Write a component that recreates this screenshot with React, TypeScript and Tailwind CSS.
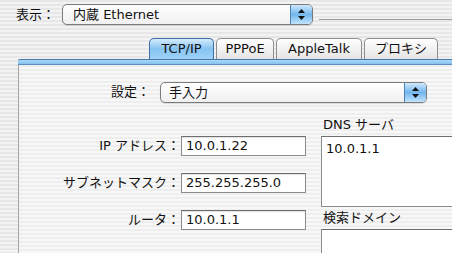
import type { ReactNode } from "react";

const TABS = [
  { label: "TCP/IP", w: "w-[65px]", active: true },
  { label: "PPPoE", w: "w-[58px]", active: false },
  { label: "AppleTalk", w: "w-[86px]", active: false },
  { label: "プロキシ", w: "w-[74px]", active: false },
];

function Arrows() {
  return (
    <div className="w-[22px] flex flex-col items-center justify-center gap-[3px] border-l border-[#4d82bb] bg-gradient-to-b from-[#cfe8fb] via-[#72b6ee] to-[#c2e4fc]">
      <svg width="7" height="4" viewBox="0 0 7 4">
        <path d="M3.5 0L7 4H0Z" fill="#111" />
      </svg>
      <svg width="7" height="4" viewBox="0 0 7 4">
        <path d="M0 0H7L3.5 4Z" fill="#111" />
      </svg>
    </div>
  );
}

function Popup({ children, className }: { children: ReactNode; className: string }) {
  return (
    <div
      className={`flex h-[21px] rounded-[5px] border border-[#7a7a7a] overflow-hidden bg-gradient-to-b from-white to-[#f0f0f0] shadow-[0_1px_1px_rgba(0,0,0,0.12)] ${className}`}
    >
      <div className="flex-1 flex items-center leading-none">{children}</div>
      <Arrows />
    </div>
  );
}

function Field({ value }: { value: string }) {
  return (
    <div className="w-[125px] h-[20px] flex items-center pl-[4px] bg-white border border-[#8c8c8c] border-t-[#6e6e6e] shadow-[inset_0_1px_1px_rgba(0,0,0,0.12)] leading-none">
      {value}
    </div>
  );
}

function Row({ label, value }: { label: string; value: string }) {
  return (
    <div className="flex items-center h-[20px]">
      <div className="w-[162px] text-right pr-[1px]">{label}</div>
      <Field value={value} />
    </div>
  );
}

export default function App() {
  return (
    <div className="w-[452px] h-[253px] overflow-hidden flex flex-col text-[13px] text-[#111] font-['DejaVu_Sans','Noto_Sans_CJK_JP',sans-serif] bg-[repeating-linear-gradient(180deg,#e7e7e7_0px,#e7e7e7_2px,#f3f3f3_2px,#f3f3f3_4px)]">
      {/* 表示 row */}
      <div className="flex h-[21px] mt-[4px] pl-[16px]">
        <div className="w-[40px] flex items-center">表示：</div>
        <Popup className="ml-[6px] w-[251px]">
          <span className="pl-[10px]">内蔵 Ethernet</span>
        </Popup>
        <div className="flex-1 ml-[6px] mt-[15px] h-px bg-[#9c9c9c]" />
      </div>

      {/* tabs */}
      <div className="flex gap-[2px] mt-[13px] h-[24px] pl-[149px]">
        {TABS.map((t) => (
          <div
            key={t.label}
            className={`${t.w} flex items-center justify-center rounded-t-[5px] border border-b-0 ${
              t.active
                ? "border-[#3f6fa6] bg-gradient-to-b from-[#d5ecfc] via-[#86c3f1] to-[#9fd2f7]"
                : "border-[#8d8d8d] bg-gradient-to-b from-white to-[#e4e4e4]"
            }`}
          >
            {t.label}
          </div>
        ))}
      </div>

      {/* panel */}
      <div className="flex-1 ml-[18px] flex flex-col">
        <div className="h-[6px] border-t border-b border-t-[#4a76a8] border-b-[#5b8fc6] bg-gradient-to-b from-[#a9d8f8] to-[#85c2f1] rounded-tl-[2px]" />
        <div className="flex-1 border-l border-[#a4a4a4] bg-[repeating-linear-gradient(180deg,#eeeeee_0px,#eeeeee_2px,#f8f8f8_2px,#f8f8f8_4px)]">
          <div className="flex h-[21px] mt-[17px]">
            <div className="w-[131px] flex items-center justify-end">設定：</div>
            <Popup className="ml-[10px] w-[267px]">
              <span className="pl-[8px]">手入力</span>
            </Popup>
          </div>

          <div className="flex mt-[15px]">
            <div className="flex flex-col gap-[17px] pt-[18px]">
              <Row label="IP アドレス：" value="10.0.1.22" />
              <Row label="サブネットマスク：" value="255.255.255.0" />
              <Row label="ルータ：" value="10.0.1.1" />
            </div>
            <div className="flex-1 ml-[15px] flex flex-col">
              <div className="h-[18px] pl-[2px] leading-[14px]">DNS サーバ</div>
              <div className="h-[71px] bg-white border border-[#8c8c8c] border-t-[#6e6e6e] border-r-0 pl-[4px] pt-[3px] leading-[17px]">
                10.0.1.1
              </div>
              <div className="h-[22px] flex items-center pl-[2px]">検索ドメイン</div>
              <div className="h-[30px] bg-white border-t border-l border-[#8c8c8c] border-t-[#6e6e6e]" />
            </div>
          </div>
        </div>
      </div>
    </div>
  );
}
